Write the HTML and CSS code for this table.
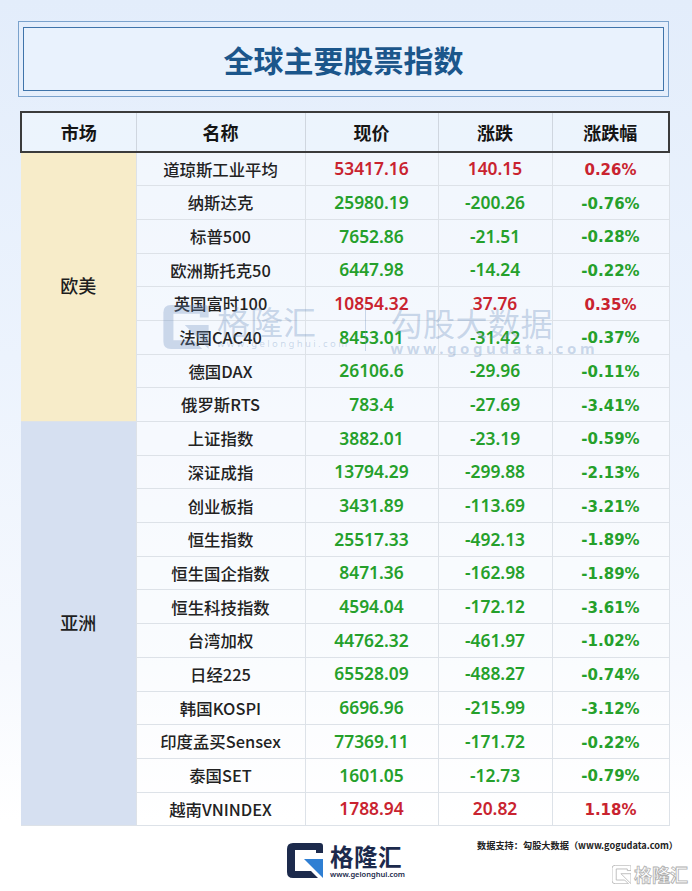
FILE: index.html
```html
<!DOCTYPE html>
<html lang="zh-CN">
<head>
<meta charset="utf-8">
<title>全球主要股票指数</title>
<link rel="stylesheet" href="styles.css">
</head>
<body>
<div class="page">
  <div class="title-box">
    <div class="title-inner"><h1 class="title">全球主要股票指数</h1></div>
  </div>

  <div class="table-wrap">
    <table class="idx">
      <colgroup>
        <col class="c1"><col class="c2"><col class="c3"><col class="c4"><col class="c5">
      </colgroup>
      <thead>
        <tr><th class="first">市场</th><th>名称</th><th>现价</th><th>涨跌</th><th class="last">涨跌幅</th></tr>
      </thead>
      <tbody>
        <tr><td class="mkt eu" rowspan="8">欧美</td><td class="name">道琼斯工业平均</td><td class="num up">53417.16</td><td class="num up">140.15</td><td class="pct up">0.26%</td></tr>
        <tr><td class="name">纳斯达克</td><td class="num dn">25980.19</td><td class="num dn">-200.26</td><td class="pct dn">-0.76%</td></tr>
        <tr><td class="name">标普500</td><td class="num dn">7652.86</td><td class="num dn">-21.51</td><td class="pct dn">-0.28%</td></tr>
        <tr><td class="name">欧洲斯托克50</td><td class="num dn">6447.98</td><td class="num dn">-14.24</td><td class="pct dn">-0.22%</td></tr>
        <tr><td class="name">英国富时100</td><td class="num up">10854.32</td><td class="num up">37.76</td><td class="pct up">0.35%</td></tr>
        <tr><td class="name">法国CAC40</td><td class="num dn">8453.01</td><td class="num dn">-31.42</td><td class="pct dn">-0.37%</td></tr>
        <tr><td class="name">德国DAX</td><td class="num dn">26106.6</td><td class="num dn">-29.96</td><td class="pct dn">-0.11%</td></tr>
        <tr><td class="name">俄罗斯RTS</td><td class="num dn">783.4</td><td class="num dn">-27.69</td><td class="pct dn">-3.41%</td></tr>
        <tr><td class="mkt as" rowspan="12">亚洲</td><td class="name">上证指数</td><td class="num dn">3882.01</td><td class="num dn">-23.19</td><td class="pct dn">-0.59%</td></tr>
        <tr><td class="name">深证成指</td><td class="num dn">13794.29</td><td class="num dn">-299.88</td><td class="pct dn">-2.13%</td></tr>
        <tr><td class="name">创业板指</td><td class="num dn">3431.89</td><td class="num dn">-113.69</td><td class="pct dn">-3.21%</td></tr>
        <tr><td class="name">恒生指数</td><td class="num dn">25517.33</td><td class="num dn">-492.13</td><td class="pct dn">-1.89%</td></tr>
        <tr><td class="name">恒生国企指数</td><td class="num dn">8471.36</td><td class="num dn">-162.98</td><td class="pct dn">-1.89%</td></tr>
        <tr><td class="name">恒生科技指数</td><td class="num dn">4594.04</td><td class="num dn">-172.12</td><td class="pct dn">-3.61%</td></tr>
        <tr><td class="name">台湾加权</td><td class="num dn">44762.32</td><td class="num dn">-461.97</td><td class="pct dn">-1.02%</td></tr>
        <tr><td class="name">日经225</td><td class="num dn">65528.09</td><td class="num dn">-488.27</td><td class="pct dn">-0.74%</td></tr>
        <tr><td class="name">韩国KOSPI</td><td class="num dn">6696.96</td><td class="num dn">-215.99</td><td class="pct dn">-3.12%</td></tr>
        <tr><td class="name">印度孟买Sensex</td><td class="num dn">77369.11</td><td class="num dn">-171.72</td><td class="pct dn">-0.22%</td></tr>
        <tr><td class="name">泰国SET</td><td class="num dn">1601.05</td><td class="num dn">-12.73</td><td class="pct dn">-0.79%</td></tr>
        <tr><td class="name">越南VNINDEX</td><td class="num up">1788.94</td><td class="num up">20.82</td><td class="pct up">1.18%</td></tr>
      </tbody>
    </table>

    <div class="watermark" aria-hidden="true">
      <svg class="wm-g" viewBox="0 0 36 35" width="46" height="44">
        <path d="M6 0 H33 Q36 0 36 3 V10 H29 V7 H8 V28 H24 L31 35 H6 Q0 35 0 29 V6 Q0 0 6 0 Z"/>
        <path d="M17 16 H36 V35 Z"/>
      </svg>
      <div class="wm-brand">
        <div class="wm-cn">格隆汇</div>
        <div class="wm-url">www.gelonghui.com</div>
      </div>
      <div class="wm-sep"></div>
      <div class="wm-brand2">
        <div class="wm-cn2">勾股大数据</div>
        <div class="wm-url2">www.gogudata.com</div>
      </div>
    </div>
  </div>

  <footer class="foot">
    <div class="foot-side"></div>
    <div class="logo">
      <svg class="logo-g" viewBox="0 0 36 35" width="36" height="35">
        <path class="navy" d="M6 0 H33 Q36 0 36 3 V10 H29 V7 H8 V28 H24 L31 35 H6 Q0 35 0 29 V6 Q0 0 6 0 Z"/>
        <path class="blue" d="M17 16 H36 V35 Z"/>
      </svg>
      <div class="logo-text">
        <div class="logo-cn">格隆汇</div>
        <div class="logo-url">www.gelonghui.com</div>
      </div>
    </div>
    <div class="foot-side right">
      <div class="source">数据支持：勾股大数据（www.gogudata.com）</div>
    </div>
    <div class="corner-mark" aria-hidden="true">
      <svg viewBox="0 0 36 35" width="19" height="19">
        <path d="M6 0 H33 Q36 0 36 3 V10 H29 V7 H8 V28 H24 L31 35 H6 Q0 35 0 29 V6 Q0 0 6 0 Z"/>
        <path d="M17 16 H36 V35 Z"/>
      </svg>
      <span class="corner-cn">格隆汇</span>
    </div>
  </footer>
</div>
</body>
</html>
```

FILE: styles.css
```css
html, body {
  margin: 0;
  padding: 0;
}
body {
  width: 692px;
  height: 891px;
  overflow: hidden;
  background: linear-gradient(180deg, #e3edfb 0%, #ecf3fd 40%, #f6f9fe 75%, #ffffff 92%);
  font-family: "Noto Sans CJK SC", "Noto Sans", sans-serif;
  color: #222;
}
.page {
  padding-top: 21px;
}

/* title */
.title-box {
  margin-left: 18px;
  width: 651px;
  height: 76px;
  box-sizing: border-box;
  border: 1px solid #7aa2cc;
  padding: 5px 4px;
}
.title-inner {
  height: 100%;
  box-sizing: border-box;
  border: 1.5px solid #3f74aa;
  background: #e9f2fd;
  display: flex;
  align-items: center;
  justify-content: center;
}
.title {
  margin: 0;
  font-size: 30px;
  font-weight: 700;
  color: #1b568b;
  line-height: 1;
}

/* table */
.table-wrap {
  position: relative;
  margin: 14px 0 0 20px;
  width: 648px;
}
.idx {
  width: 648px;
  border-collapse: collapse;
  table-layout: fixed;
}
.c1 { width: 115px; }
.c2 { width: 169px; }
.c3 { width: 133px; }
.c4 { width: 114px; }
.c5 { width: 117px; }

.idx thead tr { height: 40px; }
.idx th {
  padding: 0;
  font-size: 18px;
  font-weight: 700;
  color: #151515;
  background: rgba(240, 246, 254, 0.6);
  border-top: 2px solid #3b3b3b;
  border-bottom: 2px solid #3b3b3b;
  border-left: 1px solid #cfd6df;
  border-right: 1px solid #cfd6df;
  text-align: center;
  line-height: 1;
}
.idx th.first { border-left: 2px solid #3b3b3b; }
.idx th.last { border-right: 2px solid #3b3b3b; }

.idx tbody tr { height: 33.7px; }
.idx td {
  padding: 0;
  text-align: center;
  border: 1px solid #dde2e8;
  background: rgba(255, 255, 255, 0.45);
  line-height: 1;
}
.idx td.mkt {
  font-size: 18px;
  font-weight: 500;
  color: #1e1e1e;
  border-left: none;
  padding-bottom: 4px;
}
.idx td.eu { background: #f7ecc9; }
.idx td.as { background: #d6e0f1; }

.name {
  font-size: 16.4px;
  font-weight: 500;
  color: #222;
}
.num {
  font-family: "Noto Sans", sans-serif;
  font-size: 17.4px;
  font-weight: 600;
}
.idx td.pct {
  font-family: "DejaVu Sans", sans-serif;
  font-size: 15px;
  font-weight: 700;
  padding-top: 3px;
}
.up { color: #c9232f; }
.dn { color: #25a02b; }

/* watermark over table */
.watermark {
  position: absolute;
  left: 143px;
  top: 192px;
  display: flex;
  align-items: flex-start;
  pointer-events: none;
  color: rgba(105, 140, 188, 0.32);
}
.wm-g {
  fill: rgba(105, 140, 188, 0.3);
  margin-top: 2px;
}
.wm-brand {
  margin-left: 8px;
}
.wm-cn {
  font-size: 33px;
  line-height: 36px;
  font-weight: 400;
}
.wm-url {
  font-family: "Noto Sans", sans-serif;
  font-size: 9.5px;
  letter-spacing: 2.4px;
  line-height: 10px;
}
.wm-sep {
  width: 1px;
  height: 46px;
  background: rgba(105, 140, 188, 0.32);
  margin: 2px 24px 0 16px;
}
.wm-cn2 {
  font-size: 32px;
  line-height: 38px;
  letter-spacing: 0.5px;
}
.wm-url2 {
  font-family: "Noto Sans", sans-serif;
  font-size: 15px;
  font-weight: 700;
  letter-spacing: 3.6px;
  line-height: 14px;
}

/* footer */
.foot {
  position: relative;
  display: grid;
  grid-template-columns: 1fr auto 1fr;
  margin-top: 14px;
  height: 50px;
}
.logo {
  display: flex;
  align-items: flex-start;
  margin-top: 3px;
}
.logo-g .navy { fill: #1c2a4c; }
.logo-g .blue { fill: #2f7fd3; }
.logo-text {
  margin-left: 7px;
}
.logo-cn {
  font-size: 23.5px;
  font-weight: 700;
  color: #1c2a4c;
  line-height: 26px;
  letter-spacing: 0.5px;
}
.logo-url {
  font-family: "Noto Sans", sans-serif;
  font-size: 7.5px;
  font-weight: 600;
  color: #1c2a4c;
  line-height: 9px;
  margin-top: 1px;
}
.foot-side.right {
  display: flex;
  justify-content: flex-end;
  align-items: flex-start;
  padding-right: 14px;
}
.source {
  font-size: 9.2px;
  font-weight: 700;
  color: #222;
  line-height: 10px;
  white-space: nowrap;
}
.corner-mark {
  position: absolute;
  right: 4px;
  top: 23px;
  display: flex;
  align-items: center;
  gap: 3px;
}
.corner-mark svg {
  fill: #ffffff;
  stroke: #b5b5b5;
  stroke-width: 1.6;
}
.corner-cn {
  font-size: 18px;
  font-weight: 700;
  color: #ffffff;
  -webkit-text-stroke: 0.8px #b0b0b0;
  line-height: 22px;
}
```
